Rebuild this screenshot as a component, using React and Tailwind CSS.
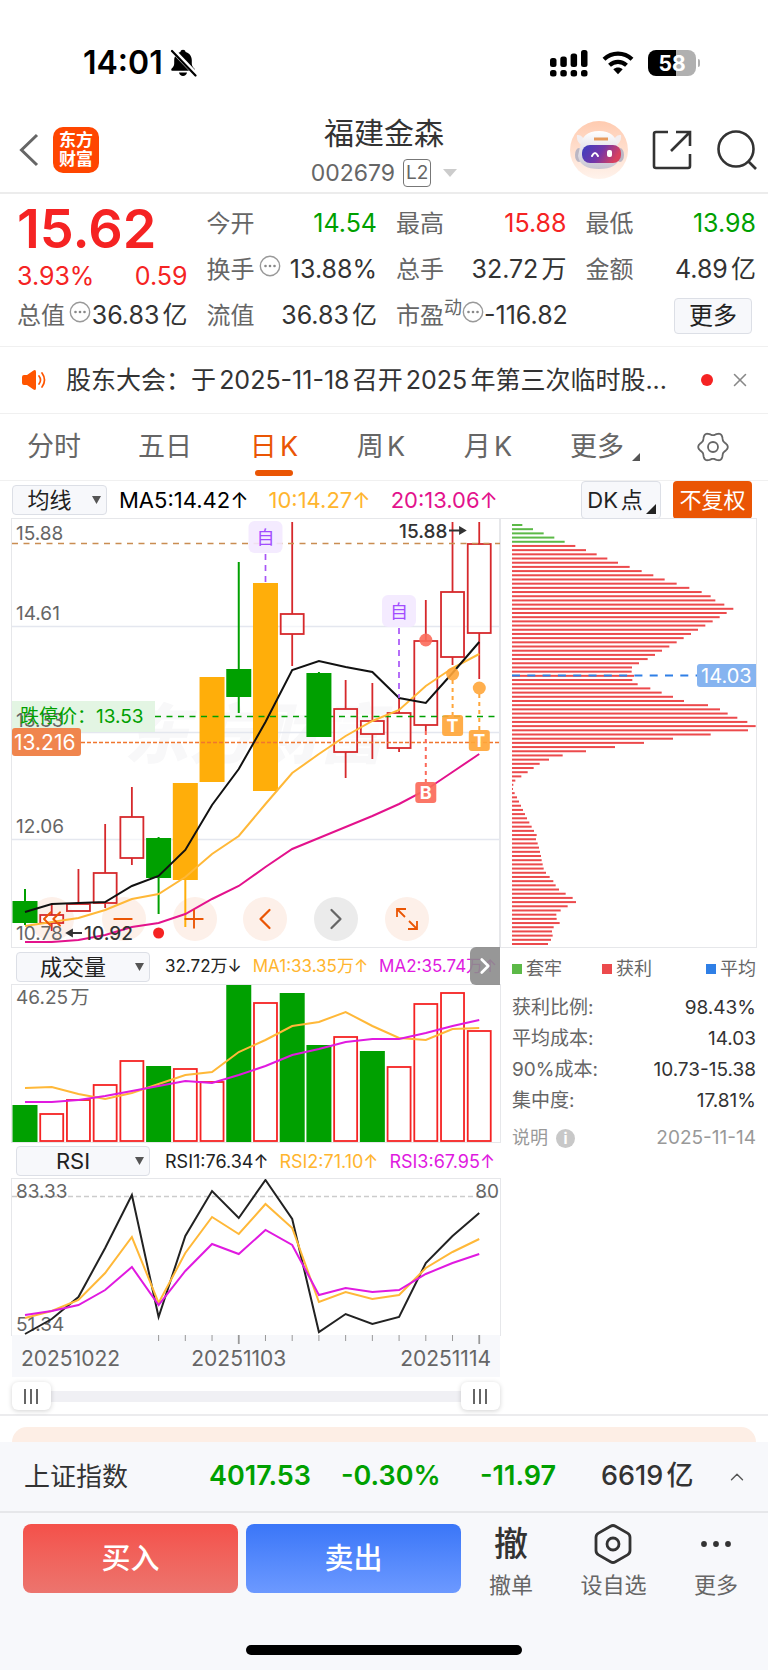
import { useState } from "react";
import { X, ChevronUp, ChevronLeft, ChevronRight, Plus, Minus, ChevronsLeft } from "lucide-react";

const START_X = 25;
const STEP_X = 26.72;
const xAt = (i) => START_X + STEP_X * i;
const toPoints = (list) => list.map((y, i) => `${xAt(i)},${y}`).join(" ");

// [kind, body top, body bottom, wick top, wick bottom]
const candles = [
  ["g", 901, 923, 889, 925],
  ["r", 915, 923, 905, 931],
  ["r", 904, 911, 869, 911],
  ["r", 873, 903, 824, 908],
  ["r", 817, 858, 787, 865],
  ["g", 838, 878, 837, 914],
  ["o", 783, 880, 783, 927],
  ["o", 677, 782, 677, 782],
  ["g", 669, 697, 562, 713],
  ["o", 583, 791, 583, 791],
  ["r", 614, 634, 522, 666],
  ["g", 673, 737, 672, 737],
  ["r", 709, 752, 680, 778],
  ["r", 721, 734, 683, 759],
  ["r", 713, 748, 698, 752],
  ["r", 641, 725, 600, 731],
  ["r", 592, 657, 522, 665],
  ["r", 544, 633, 522, 679],
];

const ma5 = [912, 904, 903, 902, 886, 876, 850, 805, 769, 722, 670, 661, 667, 672, 698, 703, 673, 642];
const ma10 = [926, 922, 918, 910, 899, 894, 877, 854, 836, 804, 773, 754, 736, 721, 710, 686, 668, 654];
const ma20 = [942, 942, 940, 935, 927, 923, 914, 899, 886, 867, 849, 838, 827, 816, 804, 790, 772, 754];

const volumes = [
  ["g", 1105], ["r", 1113], ["r", 1099], ["r", 1084], ["r", 1060], ["g", 1066],
  ["r", 1068], ["r", 1081], ["g", 985], ["r", 1002], ["g", 993], ["g", 1045],
  ["r", 1036], ["g", 1051], ["r", 1066], ["r", 1003], ["r", 992], ["r", 1030],
];
const vol1 = [1088, 1087, 1094, 1099, 1093, 1084, 1075, 1072, 1052, 1040, 1026, 1022, 1012, 1026, 1038, 1040, 1029, 1028];
const vol2 = [1102, 1102, 1100, 1096, 1091, 1086, 1081, 1083, 1075, 1066, 1055, 1049, 1042, 1039, 1039, 1033, 1026, 1020];

const rsi1 = [1334, 1319, 1297, 1248, 1195, 1317, 1236, 1191, 1218, 1180, 1219, 1332, 1314, 1324, 1317, 1263, 1236, 1213];
const rsi2 = [1318, 1311, 1300, 1273, 1237, 1303, 1253, 1217, 1234, 1204, 1228, 1302, 1292, 1299, 1295, 1268, 1252, 1239];
const rsi3 = [1315, 1311, 1305, 1290, 1267, 1305, 1271, 1244, 1254, 1230, 1245, 1295, 1288, 1292, 1290, 1274, 1263, 1254];

// chip distribution, widths in thirds of a unit
const chips = [
  31, 63, 95, 127, 158, 190, 222, 254, 286, 318, 353, 389, 424, 458, 494, 532, 569, 596, 610, 637,
  664, 644, 623, 602, 580, 558, 537, 515, 494, 472, 450, 429, 407, 381, 360, 359, 366, 361, 377, 415,
  449, 483, 516, 588, 624, 647, 676, 706, 731, 708, 596, 483, 396, 309, 222, 152, 111, 83, 65, 47,
  28, 10, 4, 3, 8, 15, 21, 27, 33, 39, 45, 52, 59, 66, 74, 72, 77, 81, 84, 87,
  89, 92, 95, 102, 113, 124, 131, 141, 161, 182, 192, 167, 146, 133, 134, 143, 125, 120, 122, 117, 108,
];

const gearPoints = Array.from({ length: 72 }, (_, i) => {
  const t = (i / 72) * Math.PI * 2;
  const r = 13.3 + 1.5 * Math.cos(6 * t);
  return `${(16 + r * Math.cos(t)).toFixed(2)},${(16 + r * Math.sin(t)).toFixed(2)}`;
}).join(" ");

const More = () => (
  <svg className="size-[22px] shrink-0 -translate-y-1" viewBox="0 0 22 22" fill="none">
    <circle cx="11" cy="11" r="9.7" stroke="#999" strokeWidth="1.4" />
    <g fill="#888">
      <circle cx="6.5" cy="11" r="1.3" />
      <circle cx="11" cy="11" r="1.3" />
      <circle cx="15.5" cy="11" r="1.3" />
    </g>
  </svg>
);

const StatusBar = () => (
  <div className="flex h-24 items-center justify-between pt-[30px] pr-[68px] pl-[83px]">
    <div className="flex items-center gap-[6px]">
      <span className="text-[32px] leading-8 font-semibold text-black">14:01</span>
      <svg className="h-7 w-7" viewBox="0 0 28 28">
        <path d="M14 .8c1.400 0 2.400.9 2.600 2.100 3.900 1 6.200 4.300 6.200 8.300v3.300c0 2.400 1 3.600 2.500 4.900.9.8.5 2.400-.9 2.400H3.600c-1.400 0-1.800-1.600-.9-2.400 1.500-1.300 2.500-2.500 2.500-4.900v-3.300c0-4 2.300-7.300 6.200-8.300.2-1.200 1.200-2.100 2.600-2.100zM10 23.500h8c-.4 2.100-2 3.500-4 3.500s-3.600-1.400-4-3.500z" fill="#000" />
        <path d="M3.500 1L27.500 26" stroke="#fff" strokeWidth="5" />
        <path d="M3 2L26.500 26.500" stroke="#000" strokeWidth="2.200" strokeLinecap="round" />
      </svg>
    </div>
    <div className="flex items-center gap-[14px]">
      <svg className="h-[27px] w-[38px]" viewBox="0 0 38 27">
        <rect x="0" y="8" width="6.500" height="9" rx="2.500" />
        <rect x="10.300" y="6.500" width="6.500" height="10.500" rx="2.500" />
        <rect x="20.600" y="3.500" width="6.500" height="13.500" rx="2.500" />
        <rect x="31" y="0" width="6.500" height="17" rx="2.500" />
        <rect x="0" y="20" width="6.500" height="6.500" rx="2.500" />
        <rect x="10.300" y="20" width="6.500" height="6.500" rx="2.500" />
        <rect x="20.600" y="20" width="6.500" height="6.500" rx="2.500" />
        <rect x="31" y="20" width="6.500" height="6.500" rx="2.500" />
      </svg>
      <svg className="h-6 w-8" viewBox="0 0 32 24" fill="none" stroke="#000">
        <path d="M2 8.300C10 .8 22 .8 30 8.300" strokeWidth="4.200" />
        <path d="M7.500 14.200c5-4.500 12-4.500 17 0" strokeWidth="4.200" />
        <path d="M11.300 18.300c2.800-2.400 6.600-2.400 9.400 0L16 23.300z" fill="#000" stroke="none" />
      </svg>
      <div className="flex items-center gap-[2px]">
        <div className="flex h-[26px] w-12 items-center justify-center rounded-lg bg-[linear-gradient(90deg,#000_58%,#b0b0b0_58%)] text-[21px] leading-none font-bold text-white">
          58
        </div>
        <div className="h-2 w-[2px] rounded-r bg-[#b0b0b0]" />
      </div>
    </div>
  </div>
);

const Robot = () => (
  <svg className="size-[58px]" viewBox="0 0 58 58">
    <defs>
      <linearGradient id="halo" x1="0" y1="0" x2="0" y2="1">
        <stop offset="0" stopColor="#ffcbb0" />
        <stop offset="1" stopColor="#fff3ec" />
      </linearGradient>
      <linearGradient id="face" x1="0" y1="0" x2="1" y2="0.300">
        <stop offset="0" stopColor="#3a3fc0" />
        <stop offset="0.550" stopColor="#7436a8" />
        <stop offset="1" stopColor="#d8405e" />
      </linearGradient>
      <linearGradient id="shell" x1="0" y1="0" x2="0" y2="1">
        <stop offset="0" stopColor="#fff" />
        <stop offset="1" stopColor="#c9c6d2" />
      </linearGradient>
    </defs>
    <circle cx="29" cy="29" r="29" fill="url(#halo)" />
    <path d="M7 14q6-1 8 8l-5 1q-4-4-3-9zM51 14q-6-1-8 8l5 1q4-4 3-9z" fill="#f3eef0" />
    <ellipse cx="9" cy="34" rx="4" ry="7" fill="#bbb7c4" />
    <ellipse cx="50" cy="34" rx="4" ry="7" fill="#bbb7c4" />
    <path d="M10 26Q12 10 29 10t19 16l2 9q-2 13-21 13T8 35z" fill="url(#shell)" />
    <rect x="12" y="24" width="39" height="18" rx="8" fill="url(#face)" />
    <path d="M24 18h14" stroke="#e79a5c" strokeWidth="3" />
    <path d="M22 35q3-6 6 0" stroke="#fff" strokeWidth="2" fill="none" strokeLinecap="round" />
    <rect x="37" y="29" width="5" height="7" rx="2" fill="#fff" />
  </svg>
);

const Header = () => (
  <header className="grid h-[98px] grid-cols-[1fr_auto_1fr] items-center border-b-2 border-[#ececec] px-[10px]">
    <div className="flex items-center gap-[14px] pt-[10px] pl-[9px]">
      <button aria-label="返回">
        <svg className="h-[34px] w-5" viewBox="0 0 20 34" fill="none">
          <path d="M18 2L2.500 17L18 32" stroke="#666" strokeWidth="3" />
        </svg>
      </button>
      <div className="w-[46px] rounded-[10px] bg-[#ff4600] py-1 text-center text-[17px] leading-[19px] font-bold text-white">
        东方
        <br />
        财富
      </div>
    </div>
    <div className="flex flex-col items-center pt-[17px]">
      <h1 className="text-[30px] leading-10 text-[#333]">福建金森</h1>
      <div className="flex h-10 items-center">
        <span className="text-[23px] leading-7 text-[#666]">002679</span>
        <span className="ml-2 rounded border border-[#777] px-[2px] text-[19px] leading-[26px] text-[#666]">L2</span>
        <svg className="ml-3 h-2 w-[14px]" viewBox="0 0 14 8">
          <path d="M0 0h14L7 8z" fill="#ccc" />
        </svg>
      </div>
    </div>
    <div className="flex items-center justify-end gap-6 pt-[10px]">
      <button aria-label="助手"><Robot /></button>
      <button aria-label="分享">
        <svg className="size-10" viewBox="0 0 40 40" fill="none" stroke="#333" strokeWidth="2.600">
          <path d="M16 2H4a2 2 0 0 0-2 2v32a2 2 0 0 0 2 2h32a2 2 0 0 0 2-2V24M24 2h14v14M38 2L19 21" />
        </svg>
      </button>
      <button aria-label="搜索">
        <svg className="size-[42px]" viewBox="0 0 42 42" fill="none" stroke="#333" strokeWidth="2.600">
          <circle cx="20" cy="20" r="17.500" />
          <path d="M32 32l8 8" />
        </svg>
      </button>
    </div>
  </header>
);

const Stat = ({ label, more, sup, value, color = "text-[#333]" }) => (
  <div className="flex h-[46px] items-center justify-between text-2xl whitespace-nowrap">
    <dt className="flex items-center text-[#666]">
      {label}
      {sup && <span className="-translate-y-2 text-lg leading-5">{sup}</span>}
      {more && <span className={sup ? "" : "ml-1"}><More /></span>}
    </dt>
    <dd className={`text-[25px] ${color}`}>{value}</dd>
  </div>
);

const red = "text-[#f52323]";
const green = "text-[#00a000]";

const Quote = () => (
  <section className="grid grid-cols-4 gap-x-[19px] border-b border-[#f0f0f0] pt-[7px] pr-3 pb-[7px] pl-[17px]">
    <div>
      <p className={`text-[54px] leading-[56px] font-semibold ${red}`}>15.62</p>
      <p className={`flex h-9 items-center justify-between pt-1 text-[25px] ${red}`}>
        <span>3.93%</span>
        <span>0.59</span>
      </p>
      <dl><Stat label="总值" more value="36.83亿" /></dl>
    </div>
    <dl>
      <Stat label="今开" value="14.54" color={green} />
      <Stat label="换手" more value="13.88%" />
      <Stat label="流值" value="36.83亿" />
    </dl>
    <dl>
      <Stat label="最高" value="15.88" color={red} />
      <Stat label="总手" value="32.72万" />
      <Stat label="市盈" sup="动" more value="-116.82" />
    </dl>
    <div>
      <dl>
        <Stat label="最低" value="13.98" color={green} />
        <Stat label="金额" value="4.89亿" />
      </dl>
      <div className="flex h-[46px] items-center justify-end pr-1">
        <button className="h-9 w-[78px] rounded border border-[#dcdfe6] bg-[#f7f8fb] text-2xl leading-8 text-[#222]">
          更多
        </button>
      </div>
    </div>
  </section>
);

const Notice = () => (
  <section className="flex h-[67px] items-center border-b border-[#f0f0f0] pr-[17px] pl-[22px]">
    <svg className="h-5 w-6 shrink-0" viewBox="0 0 24 20">
      <path d="M0 7q0-2 2-2h3L11.500.5Q14-.8 14 2v16q0 2.800-2.500 1.500L5 15H2q-2 0-2-2z" fill="#ff5500" />
      <path d="M17 6q3 4 0 8M20 3q5 7 0 14" fill="none" stroke="#ff5500" strokeWidth="1.700" strokeLinecap="round" />
    </svg>
    <p className="ml-5 min-w-0 flex-1 truncate text-[25px] leading-9 text-[#333]">
      股东大会：于2025-11-18召开2025年第三次临时股...
    </p>
    <span className="ml-6 size-3 shrink-0 rounded-full bg-[#f52323]" />
    <button aria-label="关闭" className="ml-4 text-[#888]">
      <X size={22} strokeWidth={1.700} />
    </button>
  </section>
);

const Tabs = () => {
  const [active, setActive] = useState("日K");
  return (
    <nav className="flex h-[67px] items-center justify-between border-b border-[#f0f0f0] pr-[39px] pl-[27px] text-[27px] leading-[66px] text-[#666]">
      {["分时", "五日", "日K", "周K", "月K"].map((t) => (
        <button
          key={t}
          onClick={() => setActive(t)}
          className={`relative min-w-[50px] ${active === t ? "text-[#ea5504]" : ""}`}
        >
          {t}
          {active === t && (
            <span className="absolute bottom-1 left-1/2 h-[6px] w-[38px] -translate-x-1/2 rounded-full bg-[#ea5504]" />
          )}
        </button>
      ))}
      <button className="flex items-center">
        更多
        <svg className="ml-2 size-2 translate-y-[10px]" viewBox="0 0 8 8">
          <path d="M8 0v8H0z" fill="#555" />
        </svg>
      </button>
      <button aria-label="设置">
        <svg className="size-8" viewBox="0 0 32 32" fill="none" stroke="#666" strokeWidth="1.800">
          <polygon points={gearPoints} strokeLinejoin="round" />
          <circle cx="16" cy="16" r="5" />
        </svg>
      </button>
    </nav>
  );
};

const Picker = ({ label, options, className }) => (
  <div className={`relative shrink-0 ${className}`}>
    <select
      aria-label={label}
      className="h-[30px] w-full appearance-none rounded border border-[#dcdfe6] bg-[#f7f8fb] pr-5 text-center text-[22px] leading-7 text-[#222]"
    >
      {options.map((o) => (
        <option key={o}>{o}</option>
      ))}
    </select>
    <svg className="pointer-events-none absolute top-[11px] right-[6px] h-2 w-[9px]" viewBox="0 0 9 8">
      <path d="M0 0h9L4.500 8z" fill="#555" />
    </svg>
  </div>
);

const AverageBar = () => (
  <div className="mx-3 flex h-[38px] items-center text-[22px] leading-7 whitespace-nowrap">
    <Picker label="均线" options={["均线", "BOLL"]} className="w-[95px]" />
    <span className="ml-3 text-black">MA5:14.42↑</span>
    <span className="ml-5 text-[#ffb52e]">10:14.27↑</span>
    <span className="ml-5 text-[#e3128c]">20:13.06↑</span>
    <button className="relative ml-auto h-[38px] w-20 rounded border border-[#dcdfe6] bg-[#f7f8fb] pr-3 text-[#222]">
      DK点
      <svg className="absolute right-1 bottom-1 size-[10px]" viewBox="0 0 10 10">
        <path d="M10 0v10H0z" fill="#222" />
      </svg>
    </button>
    <button className="mr-1 ml-3 h-[38px] w-[79px] rounded bg-[#ea5504] text-white">不复权</button>
  </div>
);

const Line = ({ data, color }) => (
  <polyline points={toPoints(data)} fill="none" stroke={color} strokeWidth="2" />
);

const Candle = ({ i, data }) => {
  const [kind, top, bottom, high, low] = data;
  const x = xAt(i);
  if (kind === "r") {
    return (
      <g stroke="#d6292c" strokeWidth="1.800" fill="#fff">
        <path d={`M${x} ${high}V${top}M${x} ${bottom}V${low}`} />
        <rect x={x - 11.500} y={top} width="23" height={bottom - top} fillOpacity="0.600" />
      </g>
    );
  }
  const color = kind === "g" ? "#00a000" : "#ffae0a";
  return (
    <g stroke={color} fill={color}>
      <path d={`M${x} ${high}V${low}`} strokeWidth="2" />
      <rect x={x - 12.500} y={top} width="25" height={bottom - top} stroke="none" />
    </g>
  );
};

const SelfTag = ({ x, y, end }) => (
  <g>
    <path d={`M${x} ${y + 33}V${end}`} stroke="#a855f7" strokeWidth="1.700" strokeDasharray="6 5" />
    <rect x={x - 17} y={y} width="34" height="32" rx="6" fill="#f3e9ff" fillOpacity="0.900" />
    <text x={x} y={y + 23} textAnchor="middle" fontSize="18" fill="#a24dff">自</text>
  </g>
);

const TradeTag = ({ x, dot, from, y, color, letter }) => (
  <g>
    <circle cx={x} cy={dot} r="6.500" fill={color} fillOpacity="0.900" />
    <path d={`M${x} ${from}V${y}`} stroke={color} strokeWidth="2" strokeDasharray="4 4" />
    <rect x={x - 10.500} y={y} width="21" height="21" rx="3" fill={color} fillOpacity="0.920" />
    <text x={x} y={y + 17} textAnchor="middle" fontSize="18" fontWeight="700" fill="#fff">{letter}</text>
  </g>
);

const PriceChart = () => (
  <svg className="block w-full" viewBox="12 519 488 428" fontSize="19">
    <text x="124" y="758" fontSize="65" fontWeight="800" fontStyle="italic" fill="#f8f8f9">东方财富</text>
    <path d="M12 626.500H500M12 732.500H500M12 839.500H500" stroke="#e4e7ef" strokeWidth="1.300" />
    <g fill="#fdf0e9">
      <circle cx="52" cy="919" r="22" />
      <circle cx="124" cy="919" r="22" />
      <circle cx="195" cy="919" r="22" />
    </g>
    {candles.map((c, i) => (
      <Candle key={i} i={i} data={c} />
    ))}
    <path d="M12 543.500H500" stroke="#c98d52" strokeWidth="1.700" strokeDasharray="6 5.500" />
    <path d="M155 716.500H500" stroke="#00a000" strokeWidth="1.700" strokeDasharray="6 5.500" />
    <path d="M81 742.500H500" stroke="#f0762e" strokeWidth="1.700" strokeDasharray="4 2" />
    <Line data={ma20} color="#e3128c" />
    <Line data={ma10} color="#ffb838" />
    <Line data={ma5} color="#111" />
    <rect x="12" y="701" width="143" height="31" fill="#e0f4e0" fillOpacity="0.900" />
    <g fill="#666">
      <text x="16" y="540">15.88</text>
      <text x="16" y="620">14.61</text>
      <text x="16" y="727">13.33</text>
      <text x="16" y="833">12.06</text>
      <text x="16" y="940">10.78</text>
    </g>
    <text x="20" y="723" fill="#00a000">
      跌停价：
      <tspan x="96">13.53</tspan>
    </text>
    <rect x="12" y="728" width="69" height="28" rx="3" fill="#f0854d" />
    <text x="14" y="750" fontSize="21" fill="#fff">13.216</text>
    <g fill="#333" fontWeight="500">
      <text x="84" y="940">10.92</text>
      <text x="399" y="538">15.88</text>
    </g>
    <g stroke="#333" strokeWidth="1.800" fill="#333">
      <path d="M69 933H82M449 530.500H463" />
      <path d="M72 930L67 933L72 936zM460 527.500L465 530.500L460 533.500z" />
    </g>
    <SelfTag x={265.500} y={521} end={583} />
    <SelfTag x={399} y={595} end={698} />
    <TradeTag x={425.800} dot={640} from={731} y={782} color="#fb6a5a" letter="B" />
    <TradeTag x={452.600} dot={674} from={680} y={715} color="#ffa63a" letter="T" />
    <TradeTag x={479.300} dot={688} from={694} y={730} color="#ffa63a" letter="T" />
    <circle cx="158.600" cy="933" r="5.500" fill="#f52323" />
  </svg>
);

const ChartControls = () => (
  <div className="absolute bottom-[6px] left-[18px] flex gap-[27px] text-[#ea5504] [&>button]:flex [&>button]:size-11 [&>button]:items-center [&>button]:justify-center [&>button]:rounded-full">
    <button aria-label="最早"><ChevronsLeft size={32} strokeWidth={1.500} /></button>
    <button aria-label="缩小"><Minus size={30} strokeWidth={1.500} /></button>
    <button aria-label="放大"><Plus size={30} strokeWidth={1.500} /></button>
    <button aria-label="左移" className="bg-[#fdf0e9]"><ChevronLeft size={36} strokeWidth={1.500} /></button>
    <button aria-label="右移" className="bg-[#ebebeb] text-[#666]"><ChevronRight size={36} strokeWidth={1.500} /></button>
    <button aria-label="全屏" className="bg-[#fdf0e9]">
      <svg className="size-[22px]" viewBox="0 0 22 22" fill="none" stroke="currentColor" strokeWidth="1.800">
        <path d="M1 9V1h9M1 1l8 8M21 13v8h-9M21 21l-8-8" />
      </svg>
    </button>
  </div>
);

const VolumeChart = () => (
  <svg className="block w-full" viewBox="12 985 488 157" fontSize="19">
    {volumes.map(([kind, top], i) =>
      kind === "g" ? (
        <rect key={i} x={xAt(i) - 12.500} y={top} width="25" height={1142 - top} fill="#00a000" />
      ) : (
        <rect key={i} x={xAt(i) - 11.500} y={top + 1} width="23" height={1140 - top} fill="#fff" stroke="#f52323" strokeWidth="1.800" />
      )
    )}
    <Line data={vol1} color="#ffb838" />
    <Line data={vol2} color="#e01ae0" />
    <text x="16" y="1004" fill="#666">46.25万</text>
  </svg>
);

const RsiChart = () => (
  <svg className="block w-full" viewBox="12 1179 488 156" fontSize="19">
    <path d="M12 1196.500H500" stroke="#ccc" strokeWidth="1.500" strokeDasharray="5 3" />
    <g fill="#666">
      <text x="16" y="1198">83.33</text>
      <text x="16" y="1331">51.34</text>
      <text x="499" y="1198" textAnchor="end">80</text>
    </g>
    <Line data={rsi1} color="#222" />
    <Line data={rsi2} color="#ffb838" />
    <Line data={rsi3} color="#e01ae0" />
  </svg>
);

const DateAxis = () => (
  <svg className="block w-full bg-[#f7f8fb]" viewBox="12 1335 488 42" fontSize="21" fill="#666">
    {Array.from({ length: 13 }, (_, n) => n + 5).map((i) => (
      <path key={i} d={`M${xAt(i)} 1335v${i === 8 || i === 17 ? 9 : 6}`} stroke="#999" strokeWidth={i === 8 || i === 17 ? 1.800 : 1} />
    ))}
    <text x="21" y="1366">20251022</text>
    <text x={xAt(8)} y="1366" textAnchor="middle">20251103</text>
    <text x="491" y="1366" textAnchor="end">20251114</text>
  </svg>
);

const rangeClass =
  "pointer-events-none absolute inset-x-0 top-0 h-7 w-full appearance-none bg-transparent [&::-webkit-slider-thumb]:pointer-events-auto [&::-webkit-slider-thumb]:h-7 [&::-webkit-slider-thumb]:w-[39px] [&::-webkit-slider-thumb]:appearance-none [&::-webkit-slider-thumb]:rounded-md [&::-webkit-slider-thumb]:bg-white [&::-webkit-slider-thumb]:bg-[linear-gradient(90deg,transparent_12px,#666_12px,#666_14px,transparent_14px,transparent_18px,#666_18px,#666_20px,transparent_20px,transparent_24px,#666_24px,#666_26px,transparent_26px)] [&::-webkit-slider-thumb]:bg-[length:39px_15px] [&::-webkit-slider-thumb]:bg-center [&::-webkit-slider-thumb]:bg-no-repeat [&::-webkit-slider-thumb]:shadow-[0_1px_5px_rgba(0,0,0,0.18)]";

const RangeBar = () => (
  <div className="relative mt-[5px] flex h-7 items-center">
    <div className="h-[11px] w-full bg-[#f0f0f4]" />
    <input type="range" aria-label="开始日期" defaultValue="0" className={rangeClass} />
    <input type="range" aria-label="结束日期" defaultValue="100" className={rangeClass} />
  </div>
);

const ChipChart = () => (
  <svg className="block w-full" viewBox="500 519 256 428">
    {chips.map((w, i) => (
      <rect key={i} x="512" y={524 + i * 4.190} width={w / 3} height="2" fill={i < 5 ? "#5cb947" : "#ec4a4c"} />
    ))}
    <path d="M512 675.500H697" stroke="#2f7fe6" strokeWidth="1.800" strokeDasharray="8 7.300" />
    <path d="M756 664h-56q-3 0-3 3v17q0 3 3 3h56z" fill="#86b4f0" />
    <text x="701" y="683" fontSize="20" fill="#fff">14.03</text>
  </svg>
);

const chipRows = [
  ["获利比例:", "98.43%"],
  ["平均成本:", "14.03"],
  ["90%成本:", "10.73-15.38"],
  ["集中度:", "17.81%"],
];

const ChipInfo = () => (
  <div className="pl-3 text-[19px] text-[#666]">
    <div className="mt-1 flex h-9 items-center text-lg">
      <span className="flex items-center gap-1"><i className="size-[10px] bg-[#5cb947]" />套牢</span>
      <span className="ml-10 flex items-center gap-1"><i className="size-[10px] bg-[#ec4a4c]" />获利</span>
      <span className="ml-auto flex items-center gap-1"><i className="size-[10px] bg-[#2f7fe6]" />平均</span>
    </div>
    <dl className="mt-[6px]">
      {chipRows.map(([k, v]) => (
        <div key={k} className="flex h-[31px] items-center justify-between">
          <dt>{k}</dt>
          <dd className="text-[#333]">{v}</dd>
        </div>
      ))}
    </dl>
    <div className="mt-[6px] flex h-[30px] items-center justify-between text-[#999]">
      <button className="flex items-center gap-2 text-lg">
        说明
        <span className="flex size-[19px] items-center justify-center rounded-full bg-[#c8c8c8] text-[15px] leading-none font-bold text-white">i</span>
      </button>
      <span>2025-11-14</span>
    </div>
  </div>
);

const subBar = "flex items-center gap-[11px] pt-[2px] pl-1 whitespace-nowrap text-[#222]";

const Charts = () => (
  <section className="mx-3 grid grid-cols-[488fr_256fr]">
    <div className="min-w-0">
      <div className="relative shadow-[0_0_0_1px_#e6e7ea]">
        <PriceChart />
        <ChartControls />
      </div>
      <div className={`relative h-[38px] text-[17px] [text-autospace:no-autospace] ${subBar}`}>
        <Picker label="指标一" options={["成交量", "成交额"]} className="mr-1 w-[134px]" />
        <span>32.72万↓</span>
        <span className="text-[#ffb52e]">MA1:33.35万↑</span>
        <span className="text-[#e01ae0]">MA2:35.74万↑</span>
        <button
          aria-label="展开"
          className="absolute top-0 right-0 flex h-[38px] w-[30px] items-center justify-center rounded-l-md bg-[#8c8c8c]/90 text-white"
        >
          <ChevronRight size={26} strokeWidth={2.500} />
        </button>
      </div>
      <div className="shadow-[0_0_0_1px_#e6e7ea]">
        <VolumeChart />
      </div>
      <div className={`h-[37px] text-lg ${subBar}`}>
        <Picker label="指标二" options={["RSI", "MACD"]} className="mr-1 w-[134px]" />
        <span>RSI1:76.34↑</span>
        <span className="text-[#ffb52e]">RSI2:71.10↑</span>
        <span className="text-[#e01ae0]">RSI3:67.95↑</span>
      </div>
      <div className="shadow-[0_0_0_1px_#e6e7ea]">
        <RsiChart />
      </div>
      <DateAxis />
      <RangeBar />
    </div>
    <div className="min-w-0">
      <div className="shadow-[0_0_0_1px_#e6e7ea]">
        <ChipChart />
      </div>
      <ChipInfo />
    </div>
  </section>
);

const IndexBar = () => (
  <div className="flex h-[71px] items-center border-b-2 border-[#e6e7ea] px-6 text-[27px] font-medium whitespace-nowrap text-[#333]">
    <span className="w-[185px] text-[26px] font-normal">上证指数</span>
    <span className="w-[132px] font-semibold text-[#00a000]">4017.53</span>
    <span className="w-[139px] font-semibold text-[#00a000]">-0.30%</span>
    <span className="w-[121px] font-semibold text-[#00a000]">-11.97</span>
    <span>6619亿</span>
    <button aria-label="展开指数" className="ml-auto text-[#555]">
      <ChevronUp size={22} strokeWidth={1.500} className="-mr-1" />
    </button>
  </div>
);

const action = "flex flex-col items-center text-[22px] leading-[26px] text-[#666]";

const TradeBar = () => (
  <div className="flex pt-[11px] pr-[30px] pl-[23px]">
    <button className="mr-2 h-[69px] w-[215px] rounded-lg bg-linear-to-b from-[#f4504a] to-[#ec746e] text-[29px] font-medium text-white">
      买入
    </button>
    <button className="h-[69px] w-[215px] rounded-lg bg-linear-to-b from-[#3a76f8] to-[#6c99ff] text-[29px] font-medium text-white">
      卖出
    </button>
    <div className="flex flex-1 items-start justify-between pl-7">
      <button className={action}>
        <span className="flex h-12 items-start text-[34px] leading-10 font-medium text-[#333]">撤</span>
        <span>撤单</span>
      </button>
      <button className={action}>
        <span className="h-12">
          <svg className="size-10" viewBox="0 0 40 40" fill="none" stroke="#333" strokeWidth="2.800">
            <path d="M17.500 2.200q2.500-1.400 5 0l12 6.900q2.500 1.400 2.500 4.300v13.200q0 2.900-2.500 4.300l-12 6.900q-2.500 1.400-5 0l-12-6.900Q3 29.500 3 26.600V13.400q0-2.900 2.500-4.300z" />
            <circle cx="20" cy="20" r="6" />
          </svg>
        </span>
        <span>设自选</span>
      </button>
      <button className={action}>
        <span className="h-12">
          <svg className="h-10 w-8" viewBox="0 0 32 40" fill="#333">
            <circle cx="4" cy="20" r="2.900" />
            <circle cx="16" cy="20" r="2.900" />
            <circle cx="28" cy="20" r="2.900" />
          </svg>
        </span>
        <span>更多</span>
      </button>
    </div>
  </div>
);

export default function App() {
  return (
    <div className="bg-white font-['Inter','Noto_Sans_CJK_SC',sans-serif] [text-autospace:normal]">
      <StatusBar />
      <Header />
      <Quote />
      <Notice />
      <Tabs />
      <AverageBar />
      <Charts />
      <div className="mt-1 border-t-2 border-[#ececee] px-3 pt-[11px]">
        <div className="h-[15px] rounded-t-[30px] bg-[#fdeee5]" />
      </div>
      <footer className="bg-[#f7f8fb] pb-[15px]">
        <IndexBar />
        <TradeBar />
        <div className="mx-auto mt-[47px] h-[10px] w-[276px] rounded-full bg-black" />
      </footer>
    </div>
  );
}
